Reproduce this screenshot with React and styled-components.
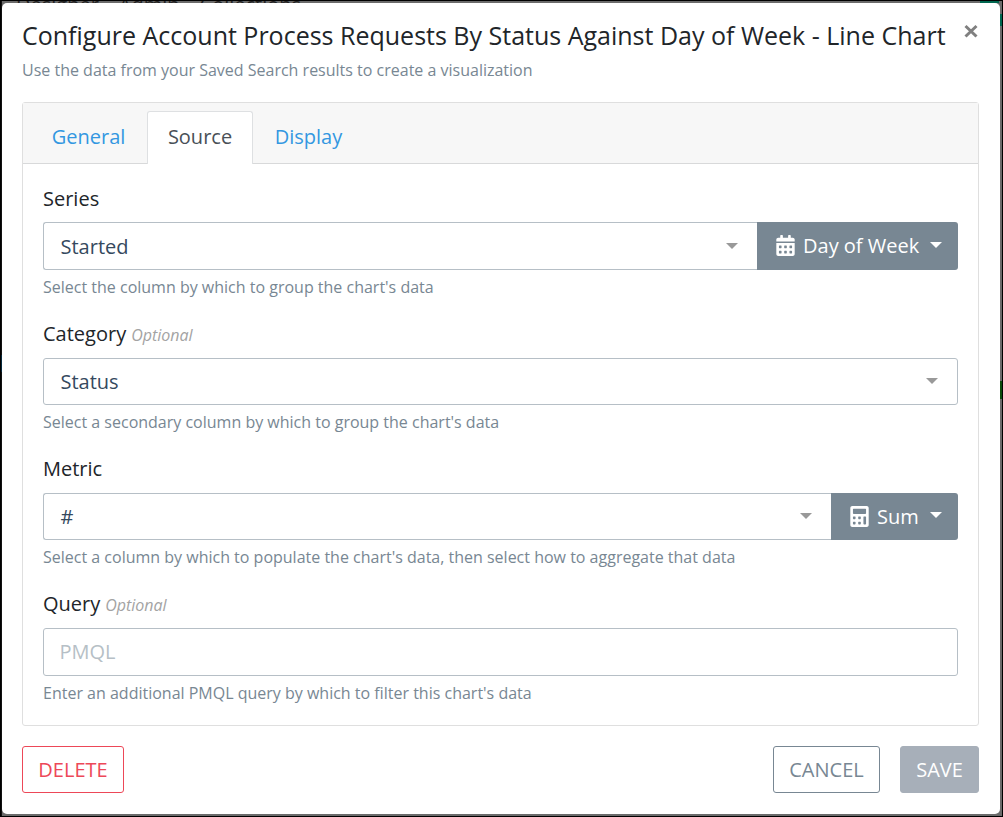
import React from "react";
import styled, { createGlobalStyle } from "styled-components";
import { FaCalendarAlt, FaCalculator } from "react-icons/fa";

const GlobalStyle = createGlobalStyle`
  *, *::before, *::after { box-sizing: border-box; }
  body { margin: 0; overflow: hidden; font-family: "Open Sans", "Noto Sans", sans-serif; }
  button, input { font-family: inherit; }
`;

const Backdrop = styled.div`
  position: relative;
  width: 1003px;
  height: 817px;
  padding: 2px 1px 1px;
  border: 1px solid #000;
  background: #6b6b6b;
  overflow: hidden;
`;

const PageNav = styled.div`
  position: absolute;
  top: -6px;
  left: 15px;
  display: flex;
  gap: 20px;
  font-size: 20px;
  line-height: 20px;
  color: #222;
  white-space: pre;
`;

const PageMark = styled.span`
  position: absolute;
  top: ${(p) => p.$top}px;
  ${(p) => p.$side}: ${(p) => p.$offset || 0}px;
  width: ${(p) => p.$width || 2}px;
  height: ${(p) => p.$height}px;
  background: ${(p) => p.$color};
`;

const Modal = styled.section`
  position: relative;
  display: flex;
  flex-direction: column;
  width: 998px;
  height: 811px;
  padding: 15px 21px 21px 20px;
  border-radius: 5px;
  background: #fff;
`;

const Header = styled.header`
  display: flex;
  justify-content: space-between;
  height: 84px;
`;

const Title = styled.h1`
  margin: 0;
  font-size: 25px;
  font-weight: 400;
  line-height: 34px;
  color: #212529;
  white-space: nowrap;
`;

const Subtitle = styled.p`
  margin: 6px 0 0;
  font-size: 16px;
  line-height: 24px;
  color: #788793;
`;

const Close = styled.button`
  display: flex;
  width: 16px;
  height: 16px;
  margin-top: 5px;
  padding: 0;
  border: 0;
  background: none;
`;

const Card = styled.div`
  height: 624px;
  border: 1px solid #dfdfdf;
  border-radius: 3px;
`;

const Tabs = styled.nav`
  display: flex;
  align-items: flex-end;
  height: 61px;
  padding-left: 9px;
  border-bottom: 1px solid #d8d9da;
  background: #f7f7f7;
`;

const Tab = styled.button`
  width: ${(p) => p.$width}px;
  height: 53px;
  margin-bottom: -1px;
  padding: 0 ${(p) => p.$inset || 0}px 3px 0;
  border: 1px solid ${(p) => (p.$active ? "#dee0e2" : "transparent")};
  border-bottom: 0;
  border-radius: 3px 3px 0 0;
  background: ${(p) => (p.$active ? "#fff" : "transparent")};
  color: ${(p) => (p.$active ? "#495057" : "#3397e1")};
  font-size: 20px;
`;

const Form = styled.div`
  padding: 20px 20px 0;
`;

const Field = styled.div`
  height: 135px;
`;

const Label = styled.label`
  display: block;
  height: ${(p) => p.$height || 39}px;
  font-size: 20px;
  line-height: 30px;
  color: #212529;
  em { margin-left: 5px; font-size: 16px; color: #a3a3a3; }
`;

const Group = styled.div`
  display: flex;
  height: ${(p) => p.$height || 47}px;
`;

const Select = styled.div`
  display: flex;
  flex: 1;
  align-items: center;
  justify-content: space-between;
  padding: 0 19px 0 16.5px;
  border: 1px solid #b6bfc6;
  ${(p) => p.$joined && "border-right: 0;"}
  border-radius: ${(p) => (p.$joined ? "3px 0 0 3px" : "3px")};
  font-size: 20px;
  color: #35495e;
`;

const Input = styled.input`
  flex: 1;
  padding: 0 15px 2px 15.5px;
  border: 1px solid #b6bfc6;
  border-radius: 3px;
  font-size: 20px;
  &::placeholder { color: #b6bfc6; opacity: 1; }
`;

const Caret = styled.span`
  margin-bottom: 1px;
  border-top: 6px solid ${(p) => p.$color || "#999"};
  border-left: 6px solid transparent;
  border-right: 6px solid transparent;
`;

const Dropdown = styled.button`
  display: flex;
  align-items: center;
  width: ${(p) => p.$width}px;
  padding: 0 16px ${(p) => p.$lift || 0}px 18px;
  border: 0;
  border-radius: 0 3px 3px 0;
  background: #788793;
  color: #fff;
  font-size: 20px;
  white-space: nowrap;
  svg { flex: none; width: 21px; height: 21px; margin-right: 7px; }
  ${Caret} { margin-left: auto; margin-bottom: ${(p) => (p.$lift ? 1 : 3)}px; }
`;

const Help = styled.small`
  display: block;
  margin-top: 5px;
  font-size: 16px;
  line-height: 24px;
  color: #788793;
`;

const Footer = styled.footer`
  display: flex;
  gap: 20px;
  margin-top: 20px;
`;

const Action = styled.button`
  width: ${(p) => p.$width}px;
  height: 47px;
  padding: 0 0 1px;
  border: 1px solid ${(p) => p.$color};
  border-radius: 3px;
  background: ${(p) => (p.$filled ? p.$color : "#fff")};
  color: ${(p) => (p.$filled ? "#fff" : p.$color)};
  font-size: 20px;
  ${(p) => p.$first && "margin-right: auto;"}
`;

export default function App() {
  return (
    <>
      <GlobalStyle />
      <Backdrop>
        <PageNav><span>Designer</span><span>Admin</span><span>Collections</span></PageNav>
        <PageMark $side="right" $top={0} $offset={3} $width={19} $height={2} $color="#00664f" />
        <PageMark $side="right" $top={13} $height={12} $color="#00664f" />
        <PageMark $side="right" $top={380} $height={18} $color="#0a4a0a" />
        <PageMark $side="left" $top={0} $height={815} $width={1} $color="#111" />
        <PageMark $side="left" $top={354} $height={17} $width={1} $color="#06293d" />
        <Modal>
          <Header>
            <div>
              <Title>Configure Account Process Requests By Status Against Day of Week - Line Chart</Title>
              <Subtitle>Use the data from your Saved Search results to create a visualization</Subtitle>
            </div>
            <Close aria-label="Close">
              <svg width="16" height="16" viewBox="0 0 16 16">
                <path d="M2.5 3 13.5 13.5M13.5 3 2.5 13.5" stroke="#808080" strokeWidth="3" />
              </svg>
            </Close>
          </Header>
          <Card>
            <Tabs>
              <Tab $width={115} $inset={2}>General</Tab>
              <Tab $width={106} $active>Source</Tab>
              <Tab $width={111}>Display</Tab>
            </Tabs>
            <Form>
              <Field>
                <Label $height={38}>Series</Label>
                <Group $height={48}>
                  <Select $joined>Started<Caret /></Select>
                  <Dropdown $width={201} $lift={2}><FaCalendarAlt />Day of Week<Caret $color="#fff" /></Dropdown>
                </Group>
                <Help>Select the column by which to group the chart's data</Help>
              </Field>
              <Field>
                <Label>Category<em>Optional</em></Label>
                <Group><Select>Status<Caret /></Select></Group>
                <Help>Select a secondary column by which to group the chart's data</Help>
              </Field>
              <Field>
                <Label>Metric</Label>
                <Group>
                  <Select $joined>#<Caret /></Select>
                  <Dropdown $width={127}><FaCalculator />Sum<Caret $color="#fff" /></Dropdown>
                </Group>
                <Help>Select a column by which to populate the chart's data, then select how to aggregate that data</Help>
              </Field>
              <Field>
                <Label>Query<em>Optional</em></Label>
                <Group $height={48}><Input placeholder="PMQL" /></Group>
                <Help>Enter an additional PMQL query by which to filter this chart's data</Help>
              </Field>
            </Form>
          </Card>
          <Footer>
            <Action $width={102} $color="#ed4858" $first>DELETE</Action>
            <Action $width={107} $color="#788793">CANCEL</Action>
            <Action $width={79} $color="#a7afb9" $filled>SAVE</Action>
          </Footer>
        </Modal>
      </Backdrop>
    </>
  );
}
